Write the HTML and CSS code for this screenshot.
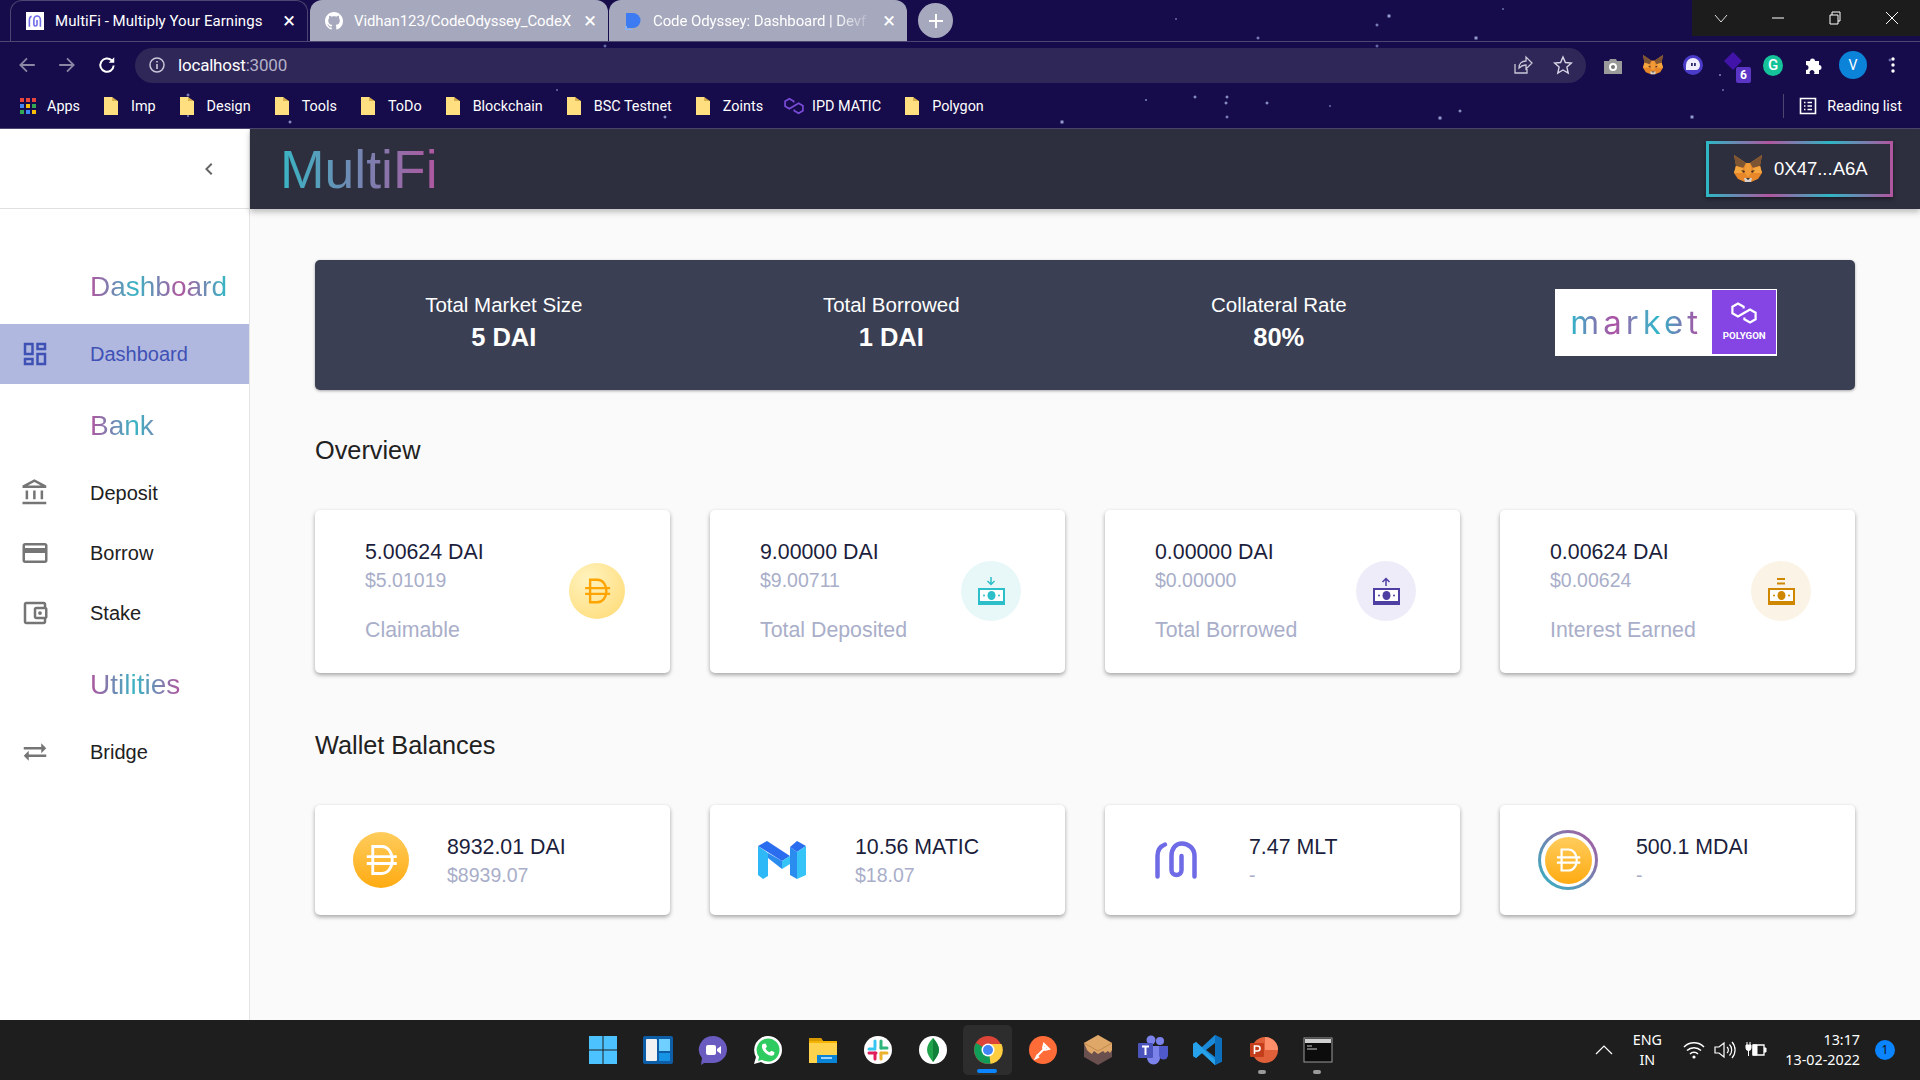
FILE: index.html
```html
<!DOCTYPE html>
<html lang="en">
<head>
<meta charset="utf-8">
<title>MultiFi - Multiply Your Earnings</title>
<link rel="stylesheet" href="styles.css">
</head>
<body>
<svg class="defs" xmlns="http://www.w3.org/2000/svg">
  <symbol id="dai" viewBox="0 0 24 24"><path d="M6.500 3h6c4 0 7 3.800 7 9s-3 9-7 9h-6zM2.500 9.700h20M2.500 14.300h20" fill="none" stroke="currentColor" stroke-width="1.900"/></symbol>
  <symbol id="folder" viewBox="0 0 14 18"><path d="M0 0h8l1 1v3h5v14H0z" fill="#ffdf80"/><path d="M8 0l6 4H8z" fill="#d9b04f"/></symbol>
  <symbol id="poly" viewBox="0 0 26 22"><path d="M12.600 6.500V4.750L7 1.500 1.400 4.750v6.500L7 14.500l6.400-3.750L19 7.500l5.600 3.250v6.500L19 20.500l-5.600-3.250V15.500" fill="none" stroke="currentColor" stroke-width="2.200"/></symbol>
  <symbol id="fox" viewBox="0 0 28 28"><path d="M0 0l12 8h4L28 0l-2 10 2 8-4 6-7 3h-6l-7-3-4-6 2-8z" fill="#e8872a"/><path d="M0 0l12 8-3 5-7-2zM28 0L16 8l3 5 7-2z" fill="#7d5533"/><path d="M12 8h4l2 9-4 5-4-5z" fill="#f09a38"/><path d="M2 11l7 2-1 5-8 0zM26 11l-7 2 1 5 8 0z" fill="#f5a63f"/><path d="M7 15l4 1-1 2zM21 15l-4 1 1 2z" fill="#3a2a20"/><path d="M10 23h8l-1 4h-6z" fill="#d8d0c8"/><path d="M12 23h4l-2 2z" fill="#2b2b2b"/></symbol>
  <symbol id="ic-dash" viewBox="0 0 24 24"><path d="M19 5v2h-4V5h4M9 5v6H5V5h4m10 8v6h-4v-6h4M9 17v2H5v-2h4M21 3h-8v6h8V3zM11 3H3v10h8V3zm10 8h-8v10h8V11zm-10 4H3v6h8v-6z"/></symbol>
  <symbol id="ic-bank" viewBox="0 0 24 24"><path d="M6.500 10h-2v7h2v-7zm6 0h-2v7h2v-7zm8.500 9H2v2h19v-2zm-2.500-9h-2v7h2v-7zm-7-6.740L16.710 6H6.290l5.210-2.740m0-2.260L2 6v2h19V6l-9.500-5z"/></symbol>
  <symbol id="ic-card" viewBox="0 0 24 24"><path d="M20 4H4c-1.110 0-1.990.89-1.990 2L2 18c0 1.110.89 2 2 2h16c1.110 0 2-.89 2-2V6c0-1.110-.89-2-2-2zm0 14H4v-6h16v6zm0-10H4V6h16v2z"/></symbol>
  <symbol id="ic-wallet" viewBox="0 0 24 24"><path d="M21 7.280V5c0-1.100-.9-2-2-2H5c-1.110 0-2 .9-2 2v14c0 1.100.89 2 2 2h14c1.100 0 2-.9 2-2v-2.280c.59-.35 1-.98 1-1.720V9c0-.74-.41-1.370-1-1.720zM20 9v6h-7V9h7zM5 19V5h14v2h-6c-1.100 0-2 .9-2 2v6c0 1.100.9 2 2 2h6v2H5z"/><circle cx="16" cy="12" r="1.500"/></symbol>
  <symbol id="ic-swap" viewBox="0 0 24 24"><path d="M6.990 11L3 15l3.990 4v-3H21v-2H6.990v-3zM21 9l-3.990-4v3H3v2h14.010v3L21 9z"/></symbol>
  <symbol id="cash" viewBox="0 0 27 17"><path d="M0 0h27v17H0z" fill="currentColor"/><path d="M2 2h23v11H2z" fill="#fff"/><ellipse cx="13.500" cy="7.500" rx="4" ry="4.500" fill="currentColor"/><circle cx="6" cy="7.500" r="1" fill="currentColor"/><circle cx="21" cy="7.500" r="1" fill="currentColor"/></symbol>
</svg>

<header class="browser">
  <div class="tabstrip">
    <div class="tab tab-active">
      <svg class="favicon" viewBox="0 0 16 16"><rect width="16" height="16" fill="#fff"/><path d="M3 13V7c0-2 1-3 2-3.300M12.800 13V7c0-2-1.500-3.500-3-3.500S7 5 7 7v4a1.400 1.400 0 0 0 2.800 0V7" fill="none" stroke="#6d6ae8" stroke-width="1.400"/></svg>
      <span class="tab-title">MultiFi - Multiply Your Earnings</span><span class="tab-x">×</span>
    </div>
    <div class="tab">
      <svg class="favicon" viewBox="0 0 16 16"><path fill="#fff" d="M8 0C3.580 0 0 3.580 0 8c0 3.540 2.290 6.530 5.470 7.590.4.070.55-.17.55-.38 0-.19-.01-.82-.01-1.490-2.010.37-2.530-.49-2.690-.94-.09-.23-.48-.94-.82-1.130-.28-.15-.68-.52-.01-.53.63-.01 1.080.58 1.230.82.720 1.210 1.870.87 2.330.66.070-.52.280-.87.510-1.070-1.780-.2-3.640-.89-3.640-3.950 0-.87.310-1.590.820-2.150-.08-.2-.36-1.020.08-2.120 0 0 .67-.21 2.200.82.640-.18 1.320-.27 2-.27s1.360.09 2 .27c1.530-1.040 2.200-.82 2.200-.82.440 1.100.16 1.920.08 2.120.510.560.820 1.270.820 2.150 0 3.070-1.870 3.750-3.650 3.950.290.250.540.730.540 1.480 0 1.070-.01 1.930-.01 2.200 0 .21.150.460.550.380A8.010 8.010 0 0 0 16 8c0-4.420-3.580-8-8-8z"/></svg>
      <span class="tab-title">Vidhan123/CodeOdyssey_CodeX</span><span class="tab-x">×</span>
    </div>
    <div class="tab">
      <svg class="favicon" viewBox="0 0 16 18"><path d="M1 1h7a7.500 7.500 0 0 1 0 15H1z" fill="#3d7bf2"/><path d="M0 14h2v3h6l-1 1H0z" fill="#8ab4f8"/></svg>
      <span class="tab-title tab-fade">Code Odyssey: Dashboard | Devf</span><span class="tab-x">×</span>
    </div>
    <div class="newtab"><svg viewBox="0 0 16 16"><path d="M8 1v14M1 8h14" stroke="#fff" stroke-width="2"/></svg></div>
    <div class="winctl">
      <svg viewBox="0 0 14 14"><path d="M1 4l6 7 6-7" fill="none" stroke="#ddd"/></svg>
      <svg viewBox="0 0 14 14"><path d="M1 7h12" stroke="#fff"/></svg>
      <svg viewBox="0 0 14 14"><path d="M2 4h8v9H2zM4 4V1h8v9h-2" fill="none" stroke="#fff"/></svg>
      <svg viewBox="0 0 14 14"><path d="M1 1l12 12M13 1L1 13" stroke="#fff"/></svg>
    </div>
  </div>

  <div class="toolbar">
    <div class="navbtn"><svg viewBox="0 0 18 18"><path d="M16 9H3M9 3L3 9l6 6" fill="none" stroke="#8a87a5" stroke-width="1.600"/></svg></div>
    <div class="navbtn"><svg viewBox="0 0 18 18"><path d="M2 9h13M9 3l6 6-6 6" fill="none" stroke="#8a87a5" stroke-width="1.600"/></svg></div>
    <div class="navbtn"><svg viewBox="0 0 18 18"><path d="M15 9.500A6 6 0 1 1 13.200 4.800" fill="none" stroke="#fff" stroke-width="1.800"/><path d="M15.500 2v5h-5z" fill="#fff"/></svg></div>
    <div class="omnibox">
      <svg class="info" viewBox="0 0 18 18"><circle cx="9" cy="9" r="7" fill="none" stroke="#c9c7d8" stroke-width="1.500"/><path d="M9 8v5M9 5v1.600" stroke="#c9c7d8" stroke-width="1.600"/></svg>
      <span class="url">localhost<span class="url-dim">:3000</span></span>
      <div class="omni-actions">
        <div class="navbtn"><svg viewBox="0 0 20 20"><path d="M2 9v9h12v-4M6 13c0-5 3-7 7-7V2l6 6-6 6v-4c-3 0-5 1-7 3z" fill="none" stroke="#c9c7d8" stroke-width="1.300"/></svg></div>
        <div class="navbtn"><svg viewBox="0 0 20 20"><path d="M10 2l2.400 5.500 6 .6-4.500 4 1.300 5.900L10 15l-5.200 3 1.300-5.900-4.500-4 6-.6z" fill="none" stroke="#d8d6e6" stroke-width="1.400"/></svg></div>
      </div>
    </div>
    <div class="navbtn"><svg viewBox="0 0 20 20"><path d="M1 6h5l1-2h6l1 2h5v13H1z" fill="#9a9a9a"/><circle cx="10" cy="12" r="4" fill="#fff"/><circle cx="10" cy="12" r="2" fill="#777"/></svg></div>
    <div class="navbtn"><svg viewBox="0 0 28 28"><use href="#fox"/></svg></div>
    <div class="navbtn"><svg viewBox="0 0 20 20"><circle cx="10" cy="10" r="10" fill="#4a3cc8"/><path d="M3 10a7 7 0 0 1 14 0c0 3-2 5-4 5H3z" fill="#f1efff"/><rect x="8" y="8" width="1.800" height="3" fill="#2b2a70"/><rect x="11" y="8" width="1.800" height="3" fill="#2b2a70"/></svg></div>
    <div class="navbtn ext-badge"><svg viewBox="0 0 20 20"><path d="M10 0l9 9-9 9-9-9z" fill="#4213a8"/></svg><span class="badge">6</span></div>
    <div class="navbtn"><div class="g-circle">G</div></div>
    <div class="navbtn"><svg viewBox="0 0 20 20"><path d="M3 6h4a2.500 2.500 0 1 1 5 0h4v4a2.500 2.500 0 1 1 0 5v4h-5a2.500 2.500 0 1 0-4 0H3v-4a2.500 2.500 0 1 0 0-5z" fill="#fff"/></svg></div>
    <div class="navbtn"><div class="avatar">V</div></div>
    <div class="navbtn"><svg viewBox="0 0 4 18" class="dots"><circle cx="2" cy="3" r="1.700" fill="#fff"/><circle cx="2" cy="9" r="1.700" fill="#fff"/><circle cx="2" cy="15" r="1.700" fill="#fff"/></svg></div>
  </div>

  <nav class="bookmarks">
    <a class="bm"><svg class="bm-grid" viewBox="0 0 16 16"><g><rect x="0" y="0" width="4" height="4" fill="#e8453c"/><rect x="6" y="0" width="4" height="4" fill="#e8453c"/><rect x="12" y="0" width="4" height="4" fill="#e8453c"/><rect x="0" y="6" width="4" height="4" fill="#4285f4"/><rect x="6" y="6" width="4" height="4" fill="#fbbc05"/><rect x="12" y="6" width="4" height="4" fill="#34a853"/><rect x="0" y="12" width="4" height="4" fill="#34a853"/><rect x="6" y="12" width="4" height="4" fill="#4285f4"/><rect x="12" y="12" width="4" height="4" fill="#fbbc05"/></g></svg>Apps</a>
    <a class="bm"><svg class="bm-folder"><use href="#folder"/></svg>Imp</a>
    <a class="bm"><svg class="bm-folder"><use href="#folder"/></svg>Design</a>
    <a class="bm"><svg class="bm-folder"><use href="#folder"/></svg>Tools</a>
    <a class="bm"><svg class="bm-folder"><use href="#folder"/></svg>ToDo</a>
    <a class="bm"><svg class="bm-folder"><use href="#folder"/></svg>Blockchain</a>
    <a class="bm"><svg class="bm-folder"><use href="#folder"/></svg>BSC Testnet</a>
    <a class="bm"><svg class="bm-folder"><use href="#folder"/></svg>Zoints</a>
    <a class="bm"><svg class="bm-poly"><use href="#poly"/></svg>IPD MATIC</a>
    <a class="bm"><svg class="bm-folder"><use href="#folder"/></svg>Polygon</a>
    <a class="bm bm-reading"><svg class="bm-read" viewBox="0 0 18 18"><path d="M1.500 1.500h15v15h-15z" fill="none" stroke="#fff" stroke-width="1.600"/><path d="M5 5.500h1.500M5 9h1.500M5 12.500h1.500M8.500 5.500H13M8.500 9H13M8.500 12.500H13" stroke="#fff" stroke-width="1.500"/></svg>Reading list</a>
  </nav>
</header>

<div class="app">
  <aside class="sidebar">
    <div class="side-top"><svg class="chev" viewBox="0 0 24 24"><path d="M15.410 7.410L14 6l-6 6 6 6 1.410-1.410L10.830 12z"/></svg></div>
    <div class="side-list">
      <div class="side-head"><span class="grad">Dashboard</span></div>
      <a class="side-item side-active"><svg class="side-ic"><use href="#ic-dash"/></svg>Dashboard</a>
      <div class="side-head"><span class="grad">Bank</span></div>
      <a class="side-item"><svg class="side-ic"><use href="#ic-bank"/></svg>Deposit</a>
      <a class="side-item"><svg class="side-ic"><use href="#ic-card"/></svg>Borrow</a>
      <a class="side-item"><svg class="side-ic"><use href="#ic-wallet"/></svg>Stake</a>
      <div class="side-head"><span class="grad">Utilities</span></div>
      <a class="side-item"><svg class="side-ic"><use href="#ic-swap"/></svg>Bridge</a>
    </div>
  </aside>

  <div class="content">
    <div class="appbar">
      <span class="brand">MultiFi</span>
      <button class="wallet"><svg class="wallet-fox"><use href="#fox"/></svg>0X47...A6A</button>
    </div>
    <main class="main">
      <section class="banner">
        <div class="stat"><div class="stat-label">Total Market Size</div><div class="stat-value">5 DAI</div></div>
        <div class="stat"><div class="stat-label">Total Borrowed</div><div class="stat-value">1 DAI</div></div>
        <div class="stat"><div class="stat-label">Collateral Rate</div><div class="stat-value">80%</div></div>
        <div class="stat">
          <div class="market">
            <span class="market-word">market</span>
            <div class="market-poly"><svg class="market-poly-ic"><use href="#poly"/></svg><span class="market-poly-text">POLYGON</span></div>
          </div>
        </div>
      </section>

      <h2 class="heading">Overview</h2>
      <section class="cards">
        <article class="card card-tall">
          <div><div class="val">5.00624 DAI</div><div class="sub">$5.01019</div><div class="label">Claimable</div></div>
          <div class="circle circle-dai"><svg class="circle-dai-ic"><use href="#dai"/></svg></div>
        </article>
        <article class="card card-tall">
          <div><div class="val">9.00000 DAI</div><div class="sub">$9.00711</div><div class="label">Total Deposited</div></div>
          <div class="circle circle-teal"><svg class="arrow" viewBox="0 0 10 9"><path d="M5 0v7M1.500 4L5 7.500 8.500 4" fill="none" stroke="currentColor" stroke-width="1.500"/></svg><svg class="cash"><use href="#cash"/></svg></div>
        </article>
        <article class="card card-tall">
          <div><div class="val">0.00000 DAI</div><div class="sub">$0.00000</div><div class="label">Total Borrowed</div></div>
          <div class="circle circle-purple"><svg class="arrow" viewBox="0 0 10 9"><path d="M5 9V2M1.500 5L5 1.500 8.500 5" fill="none" stroke="currentColor" stroke-width="1.500"/></svg><svg class="cash"><use href="#cash"/></svg></div>
        </article>
        <article class="card card-tall">
          <div><div class="val">0.00624 DAI</div><div class="sub">$0.00624</div><div class="label">Interest Earned</div></div>
          <div class="circle circle-amber"><svg class="arrow" viewBox="0 0 10 9"><path d="M1 2h8M1 6.500h8" fill="none" stroke="currentColor" stroke-width="1.800"/></svg><svg class="cash"><use href="#cash"/></svg></div>
        </article>
      </section>

      <h2 class="heading heading-2">Wallet Balances</h2>
      <section class="cards">
        <article class="card card-wallet w-dai">
          <div class="token-dai"><svg class="token-dai-ic"><use href="#dai"/></svg></div>
          <div class="w-text"><div class="val">8932.01 DAI</div><div class="sub">$8939.07</div></div>
        </article>
        <article class="card card-wallet w-matic">
          <svg class="token-matic" viewBox="0 0 48 38"><path d="M0 5l10 7v23l-5 3-5-4z" fill="#2fb8f8"/><path d="M10 12l14 8v8L10 17z" fill="#2b8cf0"/><path d="M0 5l9-5 23 15-8 5z" fill="#2b6def"/><path d="M24 20l8-5v8l-8 5z" fill="#35c3f8"/><path d="M32 6l7 5v27l-7-4z" fill="#2b8cf0"/><path d="M32 6l7-6 9 5-9 6z" fill="#2b6def"/><path d="M39 11l9-6v29l-9 4z" fill="#35c3f8"/></svg>
          <div class="w-text"><div class="val">10.56 MATIC</div><div class="sub">$18.07</div></div>
        </article>
        <article class="card card-wallet w-mlt">
          <svg class="token-mlt" viewBox="0 0 42 38"><path d="M2.500 35.500V15C2.500 9 6 5 10 3.500M39.500 35.500V15C39.500 7 33 2.500 27 2.500S16.500 7 16.500 15V29a5 5 0 0 0 10 0V15" fill="none" stroke="#6f6ae6" stroke-width="4.500" stroke-linecap="round"/></svg>
          <div class="w-text"><div class="val">7.47 MLT</div><div class="sub">-</div></div>
        </article>
        <article class="card card-wallet w-mdai">
          <div class="token-ring"><div class="token-dai token-dai-sm"><svg class="token-dai-ic-sm"><use href="#dai"/></svg></div></div>
          <div class="w-text"><div class="val">500.1 MDAI</div><div class="sub">-</div></div>
        </article>
      </section>
    </main>
  </div>
</div>

<footer class="taskbar">
  <div></div>
  <div class="task-icons">
    <div class="ti"><svg viewBox="0 0 30 30"><path d="M1 1h13.500v13.500H1zM15.500 1H29v13.500H15.500zM1 15.500h13.500V29H1zM15.500 15.500H29V29H15.500z" fill="#4cc2ff"/></svg></div>
    <div class="ti"><svg viewBox="0 0 30 30"><rect width="30" height="28" y="1" rx="2" fill="#0d5ea6"/><rect x="3" y="4" width="11" height="22" rx="1" fill="#f2f2f2"/><rect x="16" y="4" width="11" height="12" fill="#6fd0ff"/><rect x="16" y="18" width="11" height="8" fill="#1793e6"/></svg></div>
    <div class="ti"><svg viewBox="0 0 30 30"><path d="M15 1a14 13.500 0 0 1 0 27H6l-3 2 1-7A14 13.500 0 0 1 15 1z" fill="#6a5bc0"/><rect x="8" y="10" width="10" height="10" rx="2" fill="#fff"/><path d="M19 14l4-3v8l-4-3z" fill="#fff"/></svg></div>
    <div class="ti"><svg viewBox="0 0 30 30"><path d="M15 1a14 14 0 0 1 0 28c-2.500 0-5-.7-7-1.900L1 29l2-7A14 14 0 0 1 15 1z" fill="#fff"/><path d="M15 3.500a11.500 11.500 0 0 1 0 23c-2.200 0-4.200-.6-6-1.700l-4 1.100 1.100-3.900A11.500 11.500 0 0 1 15 3.500z" fill="#2ecb60"/><path d="M10 9l2.500-.5 1.500 3-1.500 2c1 1.800 2 2.800 4 3.800l2-1.500 3 1.500-.5 2.500c-1 1-3 1.200-5 .4-3-1.200-5.500-3.700-6.700-6.700-.6-1.700-.3-3.300.2-4.500z" fill="#fff"/></svg></div>
    <div class="ti"><svg viewBox="0 0 30 30"><path d="M1 3h12l2 3h14v22H1z" fill="#f5b400"/><path d="M1 3h12l2 3H1z" fill="#d99a00"/><path d="M1 8h28v20H1z" fill="#ffd34e"/><rect x="9" y="20" width="20" height="8" fill="#0a84d6"/><rect x="13" y="22" width="11" height="2" fill="#9fd6ff"/></svg></div>
    <div class="ti"><svg viewBox="0 0 30 30"><circle cx="15" cy="15" r="14" fill="#fff"/><path d="M12 6v6" stroke="#36c5f0" stroke-width="3" stroke-linecap="round"/><path d="M6 14h6" stroke="#36c5f0" stroke-width="3" stroke-linecap="round"/><path d="M18 6v7" stroke="#2eb67d" stroke-width="3" stroke-linecap="round"/><path d="M18 13h6" stroke="#2eb67d" stroke-width="3" stroke-linecap="round"/><path d="M18 18h6" stroke="#ecb22e" stroke-width="3" stroke-linecap="round"/><path d="M18 18v6" stroke="#ecb22e" stroke-width="3" stroke-linecap="round"/><path d="M6 18h7" stroke="#e01e5a" stroke-width="3" stroke-linecap="round"/><path d="M12 18v6" stroke="#e01e5a" stroke-width="3" stroke-linecap="round"/></svg></div>
    <div class="ti"><svg viewBox="0 0 30 30"><circle cx="15" cy="15" r="14" fill="#fff"/><path d="M15 3c4 4 6 8 6 12s-3 8-6 12c-3-4-6-8-6-12s2-8 6-12z" fill="#21a34c"/><path d="M15 3c3 4 6 8 6 12s-3 8-6 12z" fill="#13803a"/></svg></div>
    <div class="ti ti-active"><svg viewBox="0 0 30 30"><circle cx="15" cy="15" r="14" fill="#db4437"/><path d="M15 15L3 8a14 14 0 0 0 6 19.500z" fill="#0f9d58"/><path d="M15 15h14a14 14 0 0 1-20 12.500z" fill="#0f9d58"/><path d="M15 9h13.500a14 14 0 0 1-11 19.800z" fill="#ffcd40"/><circle cx="15" cy="15" r="6.500" fill="#fff"/><circle cx="15" cy="15" r="5" fill="#4285f4"/></svg><span class="ti-bar"></span></div>
    <div class="ti"><svg viewBox="0 0 30 30"><circle cx="15" cy="15" r="14" fill="#ff6c37"/><path d="M9 21l9-9M16 9l5 5-4 1-2-2zM8 23l2-1-1-1z" fill="none" stroke="#fff" stroke-width="2"/></svg></div>
    <div class="ti"><svg viewBox="0 0 30 30"><path d="M15 0l14 8v14l-14 8-14-8V8z" fill="#6a4f4f"/><path d="M15 0l14 8v7l-2 3-2-2-3 2-2-2-5 3-4-3-2 3-3-2-2-2-3-7z" fill="#dfa868"/><path d="M1 8l14 8 14-8" fill="none" stroke="#c18a4e"/></svg></div>
    <div class="ti"><svg viewBox="0 0 30 30"><circle cx="22" cy="6" r="4" fill="#7b83eb"/><circle cx="13" cy="5" r="4.500" fill="#7b83eb"/><path d="M9 11h13v12a6.500 6.500 0 0 1-13 0z" fill="#7b83eb"/><path d="M21 11h9v9a4.500 4.500 0 0 1-9 0z" fill="#5059c9"/><rect y="8" width="15" height="15" rx="1" fill="#4b53bc"/><path d="M4 11.500h7M7.500 11.500V20" stroke="#fff" stroke-width="2"/></svg></div>
    <div class="ti"><svg viewBox="0 0 30 30"><path d="M22 0l7 3.500v23L22 30 9 18l-6 5-3-2V9l3-2 6 5z" fill="#1a8ad8"/><path d="M22 8v14l-9-7z" fill="#1e1e1e"/><path d="M22 0l7 3.500v23L22 30z" fill="#0c6fbd"/><path d="M0 9l3-2 19 18v5L9 18 3 23l-3-2z" fill="#27a1ea"/></svg></div>
    <div class="ti"><svg viewBox="0 0 30 30"><circle cx="17" cy="15" r="13" fill="#e0603a"/><path d="M17 2a13 13 0 0 1 13 13H17z" fill="#ff8f6b"/><rect x="2" y="8" width="14" height="14" rx="1" fill="#c43e1c"/><path d="M6.500 19v-8h3a2.300 2.300 0 0 1 0 5h-3" fill="none" stroke="#fff" stroke-width="1.600"/></svg><span class="ti-dot"></span></div>
    <div class="ti"><svg viewBox="0 0 30 30"><rect x="1" y="3" width="28" height="24" fill="#0c0c0c" stroke="#9a9a9a"/><rect x="2" y="4" width="26" height="4" fill="#cfcfcf"/><path d="M4 11h5M4 14h10" stroke="#ccc"/></svg><span class="ti-dot"></span></div>
  </div>
  <div class="tray">
    <svg class="tray-chev" viewBox="0 0 18 10"><path d="M1 9l8-8 8 8" fill="none" stroke="#fff" stroke-width="1.200"/></svg>
    <div class="lang">ENG<br>IN</div>
    <svg class="tray-ic" viewBox="0 0 22 20"><path d="M1 7a14 14 0 0 1 20 0M4 10.500a10 10 0 0 1 14 0M7 14a5.500 5.500 0 0 1 8 0" fill="none" stroke="#fff" stroke-width="1.500"/><circle cx="11" cy="17" r="1.600" fill="#fff"/></svg>
    <svg class="tray-ic" viewBox="0 0 22 20"><path d="M1 7h4l5-4v14l-5-4H1z" fill="none" stroke="#fff" stroke-width="1.200"/><path d="M13 7a4 4 0 0 1 0 6M15.500 4.500a8 8 0 0 1 0 11M18 2a12 12 0 0 1 0 16" fill="none" stroke="#fff" stroke-width="1.200"/></svg>
    <svg class="tray-ic" viewBox="0 0 22 20"><path d="M8 5h11v10H8z" fill="none" stroke="#fff" stroke-width="1.300"/><path d="M19 8h2v4h-2M8 5h4v10H8zM2 2v3M5 2v3M1 5h5v3a2.500 2.500 0 0 1-5 0zM3.500 10v6" fill="#fff" stroke="#fff"/></svg>
    <div class="clock"><div>13:17</div><div>13-02-2022</div></div>
    <div class="notif">1</div>
  </div>
</footer>
</body>
</html>
```

FILE: styles.css
```css
* { box-sizing: border-box; }
html, body { margin: 0; padding: 0; }
body {
  width: 1920px;
  height: 1080px;
  overflow: hidden;
  display: flex;
  flex-direction: column;
  font-family: "Liberation Sans", Arial, sans-serif;
  background: #fafafa;
}
.defs { position: absolute; width: 0; height: 0; }

/* browser chrome */
.browser {
  height: 129px;
  flex: none;
  color: #fff;
  font-family: Roboto, "Noto Sans", sans-serif;
  border-bottom: 1px solid #4d4670;
  background-color: #160c4b;
  background-image:
    radial-gradient(circle at 1389px 16px, #c3d0ff 0, transparent 2.5px),
    radial-gradient(circle at 1377px 25px, #aeb9ef 0, transparent 2px),
    radial-gradient(circle at 1476px 38px, #c3d0ff 0, transparent 2.5px),
    radial-gradient(circle at 1258px 38px, #aeb9ef 0, transparent 2px),
    radial-gradient(circle at 1503px 9px, #8f98d8 0, transparent 1.5px),
    radial-gradient(circle at 1176px 19px, #8f98d8 0, transparent 1.5px),
    radial-gradient(circle at 1377px 46px, #8f98d8 0, transparent 2px),
    radial-gradient(circle at 1195px 97px, #c3d0ff 0, transparent 2px),
    radial-gradient(circle at 1227px 97px, #c3d0ff 0, transparent 2px),
    radial-gradient(circle at 1227px 117px, #aeb9ef 0, transparent 2px),
    radial-gradient(circle at 1062px 122px, #c3d0ff 0, transparent 2.5px),
    radial-gradient(circle at 1146px 100px, #aeb9ef 0, transparent 1.500px),
    radial-gradient(circle at 1226px 103px, #c3d0ff 0, transparent 2px),
    radial-gradient(circle at 1267px 103px, #c3d0ff 0, transparent 2px),
    radial-gradient(circle at 1440px 118px, #c3d0ff 0, transparent 2.5px),
    radial-gradient(circle at 1460px 111px, #c3d0ff 0, transparent 2px),
    radial-gradient(circle at 1692px 117px, #c3d0ff 0, transparent 2.5px),
    radial-gradient(circle at 1723px 90px, #8f98d8 0, transparent 1.5px),
    radial-gradient(circle at 1330px 106px, #8f98d8 0, transparent 1.5px),
    radial-gradient(circle at 1890px 60px, #8f98d8 0, transparent 2px),
    radial-gradient(circle at 1720px 75px, #aeb9ef 0, transparent 1.5px),
    radial-gradient(circle at 188px 95px, #aeb9ef 0, transparent 2px),
    radial-gradient(circle at 188px 116px, #aeb9ef 0, transparent 1.5px),
    radial-gradient(circle at 290px 122px, #c3d0ff 0, transparent 2px),
    radial-gradient(circle at 420px 109px, #8f98d8 0, transparent 1.5px),
    radial-gradient(circle at 557px 90px, #8f98d8 0, transparent 1.5px),
    radial-gradient(circle at 665px 117px, #c3d0ff 0, transparent 2px),
    radial-gradient(circle at 605px 46px, #8f98d8 0, transparent 2px);
}
.tabstrip {
  height: 42px;
  display: flex;
  align-items: flex-end;
  padding-left: 10px;
  border-bottom: 1px solid #4d4670;
}
.tab {
  width: 298px;
  height: 41px;
  margin-right: 1px;
  display: flex;
  align-items: center;
  padding: 0 12px 0 15px;
  font-size: 15px;
  background: #a6a8bd;
  border-radius: 12px 12px 0 0;
}
.tab-active {
  background: transparent;
  border: 1px solid #4d4670;
  border-bottom: none;
  margin-right: 2px;
}
.favicon { width: 18px; height: 18px; flex: none; margin-right: 11px; }
.tab-title { flex: 1; white-space: nowrap; overflow: hidden; letter-spacing: -.1px; }
.tab-active .tab-title { letter-spacing: .05px; }
.tab-fade {
  -webkit-mask-image: linear-gradient(90deg, #000 82%, transparent);
  mask-image: linear-gradient(90deg, #000 82%, transparent);
}
.tab-x { flex: none; font-size: 22px; line-height: 20px; margin-left: 8px; }
.newtab {
  width: 35px;
  height: 35px;
  margin: 0 0 3px 10px;
  background: #a6a8bd;
  border-radius: 50%;
  display: flex;
  align-items: center;
  justify-content: center;
}
.newtab svg { width: 16px; height: 16px; }
.winctl {
  margin-left: auto;
  align-self: flex-start;
  width: 228px;
  height: 36px;
  background: #1c1c1c;
  display: grid;
  grid-template-columns: repeat(4, 1fr);
  place-items: center;
}
.winctl svg { width: 14px; height: 14px; }
.toolbar {
  height: 46px;
  display: flex;
  align-items: center;
  padding: 0 7px;
}
.navbtn {
  width: 40px;
  height: 36px;
  flex: none;
  display: flex;
  align-items: center;
  justify-content: center;
  position: relative;
}
.navbtn > svg { width: 20px; height: 20px; }
.navbtn > svg.dots { width: 4px; height: 18px; }
.omnibox {
  flex: 1;
  height: 35px;
  margin: 0 7px 0 8px;
  border-radius: 18px;
  background: #2f2758;
  display: flex;
  align-items: center;
  padding: 0 3px 0 13px;
}
.info { width: 18px; height: 18px; flex: none; }
.url { margin-left: 12px; font-size: 17px; letter-spacing: -.2px; }
.url-dim { color: #b4b1c8; }
.omni-actions { margin-left: auto; display: flex; }
.ext-badge > svg { position: relative; top: -3px; }
.badge {
  position: absolute;
  left: 23px;
  top: 20px;
  width: 15px;
  height: 16px;
  background: #5a35c6;
  border-radius: 2px;
  font-size: 12px;
  font-weight: 700;
  line-height: 16px;
  text-align: center;
}
.g-circle {
  width: 20px;
  height: 21px;
  border-radius: 50%;
  background: #15c39a;
  color: #fff;
  font-size: 15px;
  font-weight: 500;
  line-height: 21px;
  text-align: center;
}
.avatar {
  width: 28px;
  height: 28px;
  border-radius: 50%;
  background: #0b83d9;
  font-size: 14px;
  line-height: 28px;
  text-align: center;
}
.bookmarks {
  height: 40px;
  display: flex;
  align-items: center;
  padding: 0 18px 4px 20px;
  gap: 24px;
  font-size: 14.4px;
}
.bm { display: flex; align-items: center; white-space: nowrap; }
.bm-grid { width: 16px; height: 16px; margin-right: 11px; }
.bm-folder { width: 14px; height: 18px; margin-right: 13px; }
.bm-poly { width: 20px; height: 18px; margin-right: 8px; color: #7a4bd8; margin-left: -3px; }
.bm-reading {
  margin-left: auto;
  padding-left: 15px;
  border-left: 1px solid #4d4670;
  height: 24px;
}
.bm-read { width: 18px; height: 18px; margin-right: 10px; }

/* application */
.app { flex: 1; display: flex; min-height: 0; }
.sidebar {
  width: 250px;
  flex: none;
  background: #fff;
  border-right: 1px solid #e4e4e4;
}
.side-top {
  height: 80px;
  display: flex;
  align-items: center;
  justify-content: flex-end;
  padding-right: 28px;
  border-bottom: 1px solid #e0e0e0;
}
.chev { width: 24px; height: 24px; fill: #666; }
.side-list { padding-top: 36px; }
.side-head {
  height: 79px;
  padding: 5px 0 0 90px;
  display: flex;
  align-items: center;
  font-size: 28px;
}
.grad, .brand, .market-word {
  color: transparent;
  -webkit-background-clip: text;
  background-clip: text;
}
.grad { background-image: repeating-linear-gradient(90deg, #b0569f 0, #39b5c4 45px, #b0569f 90px); }
.side-item {
  height: 60px;
  display: flex;
  align-items: center;
  padding-left: 20px;
  font-size: 20px;
  color: #212121;
}
.side-ic { width: 30px; height: 30px; margin-right: 40px; fill: #757575; flex: none; }
.side-active { background: #b1b8df; color: #3f51b5; }
.side-active .side-ic { fill: #3f51b5; }

.content { flex: 1; display: flex; flex-direction: column; min-width: 0; }
.appbar {
  height: 80px;
  flex: none;
  background: #2d2f3e;
  box-shadow: 0 3px 6px rgba(0, 0, 0, .25);
  display: flex;
  align-items: center;
  justify-content: space-between;
  padding: 0 27px 0 30px;
  position: relative;
}
.brand {
  font-size: 53.5px;
  background-image: linear-gradient(90deg, #39b5c4, #b0569f);
}
.wallet {
  width: 187px;
  height: 56px;
  background: #2d2f3e;
  border: 3px solid;
  border-image: linear-gradient(90deg, #2fb6c4, #b0569f, #2fb6c4, #b0569f) 1;
  box-shadow: 0 2px 4px rgba(0, 0, 0, .4);
  color: #fff;
  font-family: "Liberation Sans", Arial, sans-serif;
  font-size: 18.5px;
  display: flex;
  align-items: center;
  padding: 0 0 0 25px;
}
.wallet-fox { width: 28px; height: 28px; margin-right: 12px; flex: none; }
.main { flex: 1; padding: 51px 65px 0; background: #fafafa; }
.banner {
  height: 130px;
  padding-bottom: 5px;
  background: #3a3f54;
  border-radius: 5px;
  box-shadow: 0 1px 3px rgba(0, 0, 0, .35);
  display: grid;
  grid-template-columns: repeat(4, 387.5px);
  align-items: center;
  color: #fff;
}
.banner .stat { margin-left: -10px; text-align: center; }
.stat-label { font-size: 20.5px; line-height: 28px; }
.stat-value { font-size: 25.500px; font-weight: 700; line-height: 36px; }
.market {
  width: 222px;
  height: 67px;
  margin: 0 auto;
  background: #fff;
  display: flex;
  align-items: center;
  justify-content: space-between;
  padding: 0 1px 2px 15px;
}
.market-word {
  font-family: Inter, Lato, sans-serif;
  font-size: 33px;
  letter-spacing: 4px;
  line-height: 44px;
  background-image: repeating-linear-gradient(90deg, #2fb6c9 0, #ae4fa4 44px, #5f9cc0 72px, #2fb6c9 88px, #ae4fa4 130px);
}
.market-poly {
  width: 64px;
  height: 64px;
  background: #8545e5;
  color: #fff;
  display: flex;
  flex-direction: column;
  align-items: center;
  padding-top: 12px;
}
.market-poly-ic { width: 26px; height: 22px; margin-bottom: 6px; }
.market-poly-text { font: 700 9.700px Roboto, sans-serif; }

.heading {
  margin: 46px 0;
  font-size: 25.300px;
  font-weight: 400;
  line-height: 28px;
  color: #212121;
}
.heading-2 { margin-top: 58px; }
.cards { display: grid; grid-template-columns: repeat(4, 355px); gap: 40px; }
.card {
  background: #fff;
  border-radius: 5px;
  box-shadow: 0 2px 4px rgba(0, 0, 0, .35);
  display: flex;
  align-items: center;
}
.card-tall {
  height: 163px;
  padding: 28px 44px 0 50px;
  align-items: flex-start;
  justify-content: space-between;
}
.card-wallet { height: 110px; }
.w-text { padding-top: 2px; }
.val { font-size: 21.330px; line-height: 28px; color: #1b1e3c; }
.sub { font-size: 19.500px; line-height: 28px; color: #a9aec9; }
.label { font-size: 21.330px; line-height: 28px; color: #a9aec9; margin-top: 22px; }
.circle {
  width: 60px;
  height: 60px;
  border-radius: 50%;
  margin-top: 23px;
  display: flex;
  flex-direction: column;
  align-items: center;
  justify-content: center;
  gap: 2px;
}
.circle-dai {
  width: 56px;
  height: 56px;
  margin: 25px 1px 0 3px;
  background: radial-gradient(circle at 35% 30%, #fff3bf, #ffd970);
  color: #ffa400;
}
.circle-dai-ic { width: 30px; height: 30px; }
.circle-teal { background: #e8f7f8; color: #2cbec9; }
.circle-purple { background: #eeecf8; color: #4e3fa3; }
.circle-amber { background: #faf3e6; color: #d08700; }
.arrow { width: 10px; height: 9px; }
.cash { width: 27px; height: 17px; }

.token-dai {
  width: 56px;
  height: 56px;
  flex: none;
  border-radius: 50%;
  background: linear-gradient(#ffcc5c, #ffab12);
  color: #fff;
  display: flex;
  align-items: center;
  justify-content: center;
}
.token-dai-ic { width: 36px; height: 36px; }
.token-dai-sm { width: 47px; height: 47px; }
.token-dai-ic-sm { width: 28px; height: 28px; }
.token-ring {
  width: 60px;
  height: 60px;
  flex: none;
  border-radius: 50%;
  display: flex;
  align-items: center;
  justify-content: center;
  border: 3px solid transparent;
  background: linear-gradient(#fff, #fff) padding-box, linear-gradient(225deg, #b0569f, #2fb6c4) border-box;
}
.token-matic { width: 48px; height: 38px; flex: none; }
.token-mlt { width: 42px; height: 38px; flex: none; }
.w-dai { padding-left: 38px; gap: 38px; }
.w-matic { padding-left: 48px; gap: 49px; }
.w-mlt { padding-left: 50px; gap: 52px; }
.w-mdai { padding-left: 38px; gap: 38px; }

/* taskbar */
.taskbar {
  height: 60px;
  flex: none;
  background: #1e1e1e;
  display: grid;
  grid-template-columns: 1fr auto 1fr;
  color: #fff;
  font-family: "Noto Sans", "Open Sans", sans-serif;
}
.task-icons { display: flex; }
.ti {
  width: 55px;
  display: flex;
  align-items: center;
  justify-content: center;
  position: relative;
}
.ti > svg { width: 30px; height: 30px; }
.ti-active::before {
  content: "";
  position: absolute;
  left: 3px;
  right: 3px;
  top: 5px;
  bottom: 5px;
  background: #2d2d2d;
  border-radius: 5px;
}
.ti-active > svg { position: relative; }
.ti-bar {
  position: absolute;
  left: 17px;
  top: 49px;
  width: 20px;
  height: 4px;
  border-radius: 2px;
  background: #0a84ff;
}
.ti-dot {
  position: absolute;
  left: 23px;
  top: 50px;
  width: 8px;
  height: 4px;
  border-radius: 2px;
  background: #9a9a9a;
}
.tray {
  display: flex;
  align-items: center;
  justify-content: flex-end;
  padding-right: 25px;
  font-size: 14.3px;
}
.tray-chev { width: 18px; height: 10px; margin-right: 14px; }
.lang { width: 40px; text-align: center; line-height: 20px; margin-right: 16px; }
.tray-ic { width: 22px; height: 20px; margin-right: 9px; }
.clock { margin-left: 9px; text-align: right; line-height: 20px; }
.notif {
  width: 20px;
  height: 20px;
  margin-left: 15px;
  border-radius: 50%;
  background: #0a84ff;
  color: #111;
  text-align: center;
  font-size: 12px;
  line-height: 20px;
}
```
